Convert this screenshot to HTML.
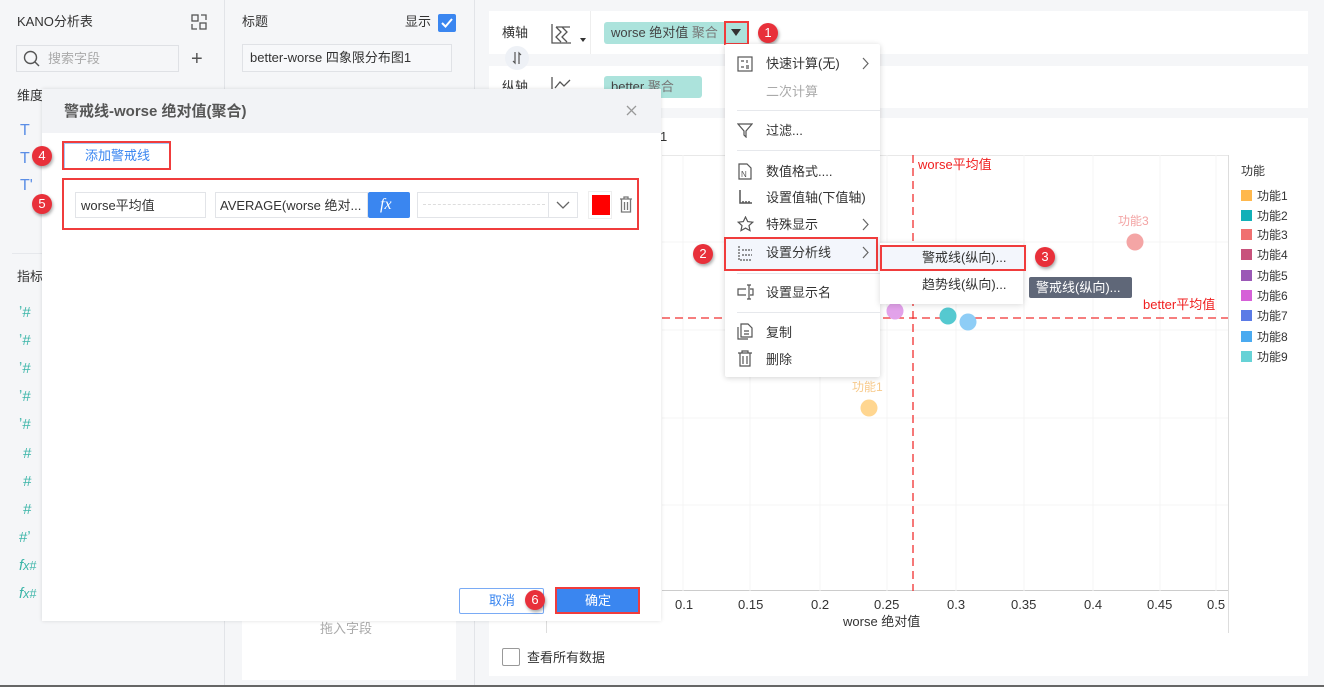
<!DOCTYPE html>
<html><head><meta charset="utf-8"><style>
*{box-sizing:border-box;margin:0;padding:0}
body{width:1324px;height:687px;position:relative;overflow:hidden;background:#f5f6f8;font-family:"Liberation Sans","Noto Sans CJK SC",sans-serif;font-size:13px;color:#333}
.a{position:absolute}
.t{position:absolute;white-space:nowrap;line-height:1}
.badge{position:absolute;width:20px;height:20px;border-radius:50%;background:#e8303a;color:#fff;font-size:13px;text-align:center;line-height:20px;box-shadow:1px 2px 3px rgba(0,0,0,.35)}
.rb{position:absolute;border:2px solid #f03c3c}
.mi{position:absolute;left:14px;font-size:13px;color:#333;white-space:nowrap;line-height:1}
.sep{position:absolute;left:12px;right:0;height:1px;background:#e6e8ec}
.hash{position:absolute;left:19px;color:#3bb5a8;font-size:15px;line-height:1}
.leg{position:absolute;left:1241px;font-size:12px;color:#333;line-height:1;white-space:nowrap}
.leg i{display:inline-block;width:11px;height:11px;margin-right:5px;vertical-align:-1px}
.xl{position:absolute;top:598px;font-size:13px;color:#333;line-height:1}
.chev{position:absolute;left:137px}
</style></head><body>
<!-- left panel -->
<div class="a" style="left:224px;top:0;width:1px;height:687px;background:#e2e4e8"></div>
<div class="t" style="left:17px;top:15px;font-size:13px">KANO分析表</div>
<svg class="a" style="left:191px;top:14px" width="16" height="16" fill="none" stroke="#555" stroke-width="1.3"><rect x="1" y="1" width="6" height="6"/><rect x="9" y="9" width="6" height="6"/><path d="M10 1h5v5M1 10v5h5"/></svg>
<div class="a" style="left:16px;top:45px;width:163px;height:27px;border:1px solid #dfe1e5;background:#f5f6f8"></div>
<svg class="a" style="left:23px;top:50px" width="17" height="17" fill="none" stroke="#555" stroke-width="1.4"><circle cx="7.5" cy="7.5" r="6"/><path d="M12 12l4 4"/></svg>
<div class="t" style="left:48px;top:52px;color:#aaa">搜索字段</div>
<div class="t" style="left:191px;top:49px;font-size:20px;color:#555">+</div>
<div class="t" style="left:17px;top:89px">维度</div>
<div class="t" style="left:20px;top:123px;color:#5b8ee6;font-size:16px">T</div>
<div class="t" style="left:20px;top:151px;color:#5b8ee6;font-size:16px">T</div>
<div class="t" style="left:20px;top:178px;color:#5b8ee6;font-size:16px">T'</div>
<div class="a" style="left:12px;top:253px;width:212px;height:1px;background:#e6e8ec"></div>
<div class="t" style="left:17px;top:270px">指标</div>
<div class="hash" style="top:305px">ʼ#</div><div class="hash" style="top:333px">ʼ#</div><div class="hash" style="top:361px">ʼ#</div><div class="hash" style="top:389px">ʼ#</div><div class="hash" style="top:417px">ʼ#</div>
<div class="hash" style="top:446px">&nbsp;#</div><div class="hash" style="top:474px">&nbsp;#</div><div class="hash" style="top:502px">&nbsp;#</div><div class="hash" style="top:530px">#ʼ</div>
<div class="hash" style="top:558px;font-style:italic">f<small>x#</small></div><div class="hash" style="top:586px;font-style:italic">f<small>x#</small></div>
<!-- middle panel -->
<div class="t" style="left:242px;top:15px">标题</div>
<div class="t" style="left:405px;top:15px">显示</div>
<div class="a" style="left:438px;top:14px;width:18px;height:18px;background:#3a86f0;border-radius:2px"></div>
<svg class="a" style="left:440px;top:16px" width="14" height="14" fill="none" stroke="#fff" stroke-width="2"><path d="M2 7l3.5 3.5L12 3"/></svg>
<div class="a" style="left:242px;top:44px;width:210px;height:28px;border:1px solid #e0e2e6;background:#f7f8fa"></div>
<div class="t" style="left:250px;top:51px">better-worse 四象限分布图1</div>
<div class="a" style="left:474px;top:0;width:1px;height:687px;background:#e2e4e8"></div>
<div class="a" style="left:242px;top:620px;width:214px;height:60px;background:#fff"></div>
<div class="t" style="left:320px;top:622px;color:#aaa">拖入字段</div>
<!-- right: axis rows -->
<div class="a" style="left:489px;top:11px;width:819px;height:43px;background:#fff"></div>
<div class="a" style="left:489px;top:66px;width:819px;height:42px;background:#fff"></div>
<div class="a" style="left:590px;top:11px;width:1px;height:43px;background:#eee"></div>
<div class="t" style="left:502px;top:26px">横轴</div>
<svg class="a" style="left:550px;top:23px" width="38" height="22" fill="none" stroke="#555" stroke-width="1.3"><path d="M2 1v19h19M6 4l5 5-5 5 5 5M12 4l5 5-5 5 5 5M6 4h14"/><path d="M30 15l3 4 3-4z" fill="#333" stroke="none"/></svg>
<div class="a" style="left:505px;top:46px;width:24px;height:24px;border-radius:50%;background:#eef1f6"></div>
<svg class="a" style="left:509px;top:50px" width="16" height="16" fill="none" stroke="#555" stroke-width="1.2"><path d="M6 2v11l-2-2M10 14V3l2 2"/></svg>
<div class="a" style="left:604px;top:22px;width:144px;height:22px;background:#ace3dc;border-radius:3px"></div>
<div class="t" style="left:611px;top:26px;color:#444">worse 绝对值 <span style="color:#777">聚合</span></div>
<div class="rb" style="left:724px;top:21px;width:25px;height:24px"></div>
<svg class="a" style="left:731px;top:29px" width="10" height="8"><path d="M0 0h10L5 7z" fill="#333"/></svg>
<div class="badge" style="left:758px;top:23px">1</div>
<div class="t" style="left:502px;top:80px">纵轴</div>
<svg class="a" style="left:550px;top:76px" width="26" height="18" fill="none" stroke="#555" stroke-width="1.3"><path d="M2 1v16M2 16h20M5 12l5-6 4 4 6-6"/></svg>
<div class="a" style="left:604px;top:76px;width:98px;height:22px;background:#ace3dc;border-radius:3px"></div>
<div class="t" style="left:611px;top:80px;color:#444">better <span style="color:#777">聚合</span></div>
<!-- chart panel -->
<div class="a" style="left:489px;top:118px;width:819px;height:558px;background:#fff"></div>
<div class="t" style="left:660px;top:130px">1</div>
<div class="a" style="left:662px;top:155px;width:566px;height:1px;background:#e8e8e8"></div>
<div class="a" style="left:1228px;top:155px;width:1px;height:478px;background:#ddd"></div>
<div class="a" style="left:662px;top:590px;width:566px;height:1px;background:#ccc"></div>
<div class="a" style="left:546px;top:591px;width:1px;height:42px;background:#ddd"></div>
<svg class="a" style="left:662px;top:155px" width="566" height="436">
<g stroke="#f4f4f4" stroke-width="1">
<path d="M21 0v436M88 0v436M158 0v436M225 0v436M294 0v436M362 0v436M431 0v436M498 0v436M554 0v436"/>
<path d="M0 87h566M0 175h566M0 263h566M0 350h566"/>
</g>
<path d="M251 0v436" stroke="#f03030" stroke-width="1.3" stroke-dasharray="8,5"/>
<path d="M0 163h566" stroke="#f03030" stroke-width="1.3" stroke-dasharray="8,5"/>
<circle cx="473" cy="87" r="8.5" fill="#f4a5a5"/>
<circle cx="233" cy="156" r="8.5" fill="#e2a2ea"/>
<circle cx="286" cy="161" r="8.5" fill="#55c9d0"/>
<circle cx="306" cy="167" r="8.5" fill="#8ecdf6"/>
<circle cx="207" cy="253" r="8.5" fill="#ffd690"/>
</svg>
<div class="t" style="left:1118px;top:215px;font-size:12px;color:#f3a3a3">功能3</div>
<div class="t" style="left:852px;top:381px;font-size:12px;color:#f7c98a">功能1</div>
<div class="t" style="left:918px;top:158px;color:#f02020">worse平均值</div>
<div class="t" style="left:1143px;top:298px;color:#f02020">better平均值</div>
<div class="xl" style="left:675px">0.1</div><div class="xl" style="left:738px">0.15</div><div class="xl" style="left:811px">0.2</div><div class="xl" style="left:874px">0.25</div><div class="xl" style="left:947px">0.3</div><div class="xl" style="left:1011px">0.35</div><div class="xl" style="left:1084px">0.4</div><div class="xl" style="left:1147px">0.45</div><div class="xl" style="left:1207px">0.5</div>
<div class="t" style="left:843px;top:615px">worse 绝对值</div>
<div class="t" style="left:1241px;top:165px;font-size:12px">功能</div>
<div class="leg" style="top:190px"><i style="background:#ffb84d"></i>功能1</div>
<div class="leg" style="top:210px"><i style="background:#12b0b8"></i>功能2</div>
<div class="leg" style="top:229px"><i style="background:#f07070"></i>功能3</div>
<div class="leg" style="top:249px"><i style="background:#c8527c"></i>功能4</div>
<div class="leg" style="top:270px"><i style="background:#9b59b6"></i>功能5</div>
<div class="leg" style="top:290px"><i style="background:#d660d8"></i>功能6</div>
<div class="leg" style="top:310px"><i style="background:#5b7be6"></i>功能7</div>
<div class="leg" style="top:331px"><i style="background:#4aaaf0"></i>功能8</div>
<div class="leg" style="top:351px"><i style="background:#66d2d6"></i>功能9</div>
<div class="a" style="left:502px;top:648px;width:18px;height:18px;border:1px solid #999;border-radius:2px;background:#fff"></div>
<div class="t" style="left:527px;top:651px">查看所有数据</div>
<div class="a" style="left:0;top:685px;width:1324px;height:2px;background:#666"></div>
<!-- dialog -->
<div class="a" style="left:42px;top:89px;width:619px;height:532px;background:#fff;box-shadow:0 0 4px rgba(0,0,0,.12)"></div>
<div class="a" style="left:42px;top:89px;width:619px;height:44px;background:#f2f3f6"></div>
<div class="t" style="left:64px;top:104px;font-size:15px;font-weight:bold;color:#555">警戒线-worse 绝对值(聚合)</div>
<svg class="a" style="left:626px;top:105px" width="11" height="11" stroke="#999" stroke-width="1.3"><path d="M1 1l9 9M10 1l-9 9"/></svg>
<div class="a" style="left:64px;top:143px;width:106px;height:26px;border:1px solid #a9c8f5"></div>
<div class="rb" style="left:62px;top:141px;width:109px;height:29px"></div>
<div class="t" style="left:85px;top:149px;color:#3a86f0">添加警戒线</div>
<div class="badge" style="left:32px;top:146px">4</div>
<div class="rb" style="left:62px;top:178px;width:577px;height:52px"></div>
<div class="badge" style="left:32px;top:194px">5</div>
<div class="a" style="left:75px;top:192px;width:131px;height:26px;border:1px solid #e2e4e8"></div>
<div class="t" style="left:81px;top:199px">worse平均值</div>
<div class="a" style="left:215px;top:192px;width:153px;height:26px;border:1px solid #e2e4e8"></div>
<div class="t" style="left:220px;top:199px">AVERAGE(worse 绝对...</div>
<div class="a" style="left:368px;top:192px;width:42px;height:26px;background:#3a86f0;border-radius:2px"></div>
<div class="t" style="left:380px;top:197px;color:#fff;font-style:italic;font-family:'Liberation Serif',serif;font-size:16px">fx</div>
<div class="a" style="left:417px;top:192px;width:161px;height:26px;border:1px solid #e2e4e8"></div>
<div class="a" style="left:423px;top:204px;width:122px;height:0;border-top:1px dashed #ddd"></div>
<div class="a" style="left:548px;top:192px;width:1px;height:26px;background:#e2e4e8"></div>
<svg class="a" style="left:556px;top:200px" width="14" height="10" fill="none" stroke="#666" stroke-width="1.3"><path d="M1 2l6 6 6-6"/></svg>
<div class="a" style="left:588px;top:191px;width:24px;height:28px;border:1px solid #eee"></div>
<div class="a" style="left:592px;top:195px;width:18px;height:20px;background:#f00"></div>
<svg class="a" style="left:619px;top:196px" width="14" height="17" fill="none" stroke="#777" stroke-width="1.3"><path d="M1 3h12M5 3V1h4v2M2.5 3v13h9V3M5.5 6v8M8.5 6v8"/></svg>
<div class="a" style="left:459px;top:588px;width:85px;height:26px;border:1px solid #7aabf5;border-radius:2px"></div>
<div class="t" style="left:489px;top:594px;color:#3a86f0">取消</div>
<div class="badge" style="left:525px;top:590px">6</div>
<div class="a" style="left:555px;top:587px;width:85px;height:27px;background:#3a86f0;border:2px solid #f03c3c"></div>
<div class="t" style="left:585px;top:594px;color:#fff">确定</div>
<!-- menu -->
<div class="a" style="left:725px;top:44px;width:155px;height:333px;background:#fff;box-shadow:0 1px 6px rgba(0,0,0,.18);border-radius:2px">
<svg class="a" style="left:12px;top:12px" width="16" height="16" fill="none" stroke="#555" stroke-width="1.2"><rect x="1" y="1" width="14" height="14"/><path d="M4 5h3M10 4v3M4 11h3M9 10h3M9 12h3"/></svg>
<div class="mi" style="left:41px;top:13px">快速计算(无)</div><svg class="chev" style="top:13px" width="8" height="13" fill="none" stroke="#666" stroke-width="1.2"><path d="M1 1l5 5.5L1 12"/></svg>
<div class="mi" style="left:41px;top:41px;color:#aaa">二次计算</div>
<div class="sep" style="top:66px"></div>
<svg class="a" style="left:12px;top:78px" width="16" height="16" fill="none" stroke="#555" stroke-width="1.2"><path d="M1 2h14L9 9v6L7 13V9z"/></svg>
<div class="mi" style="left:41px;top:80px">过滤...</div>
<div class="sep" style="top:106px"></div>
<svg class="a" style="left:12px;top:119px" width="16" height="17" fill="none" stroke="#555" stroke-width="1.2"><path d="M2 1h8l4 4v11H2z"/><text x="4" y="14" font-size="8" fill="#555" stroke="none">N</text></svg>
<div class="mi" style="left:41px;top:121px">数值格式....</div>
<svg class="a" style="left:12px;top:145px" width="16" height="16" fill="none" stroke="#555" stroke-width="1.5"><path d="M3 1v13h12M6 12v2M9 12v2M12 12v2"/></svg>
<div class="mi" style="left:41px;top:147px">设置值轴(下值轴)</div>
<svg class="a" style="left:12px;top:172px" width="17" height="16" fill="none" stroke="#555" stroke-width="1.2"><path d="M8.5 1l2.2 4.6 5 .6-3.7 3.4 1 5-4.5-2.5-4.5 2.5 1-5L1.3 6.2l5-.6z"/></svg>
<div class="mi" style="left:41px;top:174px">特殊显示</div><svg class="chev" style="top:174px" width="8" height="13" fill="none" stroke="#666" stroke-width="1.2"><path d="M1 1l5 5.5L1 12"/></svg>
<div class="a" style="left:0;top:193px;width:155px;height:33px;background:#f3f6fc"></div>
<svg class="a" style="left:12px;top:201px" width="16" height="16" fill="none" stroke="#555" stroke-width="1.2"><path d="M2 1v14h13M5 5h10M5 10h10" stroke-dasharray="2,1"/></svg>
<div class="mi" style="left:41px;top:202px">设置分析线</div><svg class="chev" style="top:202px" width="8" height="13" fill="none" stroke="#666" stroke-width="1.2"><path d="M1 1l5 5.5L1 12"/></svg>
<div class="sep" style="top:229px"></div>
<svg class="a" style="left:12px;top:240px" width="18" height="16" fill="none" stroke="#555" stroke-width="1.2"><path d="M9 5H1v6h8M12 1v14M10 1h4M10 15h4M13 5h3v6h-3"/></svg>
<div class="mi" style="left:41px;top:242px">设置显示名</div>
<div class="sep" style="top:268px"></div>
<svg class="a" style="left:12px;top:279px" width="16" height="17" fill="none" stroke="#555" stroke-width="1.2"><path d="M4 1h7l4 4v9H4zM1 4v12h10M7 8h5M7 11h5"/></svg>
<div class="mi" style="left:41px;top:282px">复制</div>
<svg class="a" style="left:12px;top:306px" width="16" height="17" fill="none" stroke="#555" stroke-width="1.2"><path d="M1 3h14M5 3V1h6v2M3 3v13h10V3M6 6v8M10 6v8"/></svg>
<div class="mi" style="left:41px;top:309px">删除</div>
</div>
<div class="rb" style="left:724px;top:237px;width:154px;height:34px"></div>
<div class="badge" style="left:693px;top:244px">2</div>
<!-- submenu -->
<div class="a" style="left:880px;top:243px;width:143px;height:61px;background:#fff;box-shadow:0 1px 6px rgba(0,0,0,.15)"></div>
<div class="a" style="left:882px;top:247px;width:142px;height:22px;background:#f3f6fc"></div>
<div class="rb" style="left:880px;top:245px;width:146px;height:26px"></div>
<div class="t" style="left:922px;top:251px">警戒线(纵向)...</div>
<div class="t" style="left:922px;top:278px">趋势线(纵向)...</div>
<div class="badge" style="left:1035px;top:247px">3</div>
<div class="a" style="left:1029px;top:277px;width:103px;height:21px;background:#5f6778;border-radius:2px"></div>
<div class="t" style="left:1036px;top:281px;color:#fff">警戒线(纵向)...</div>
</body></html>
